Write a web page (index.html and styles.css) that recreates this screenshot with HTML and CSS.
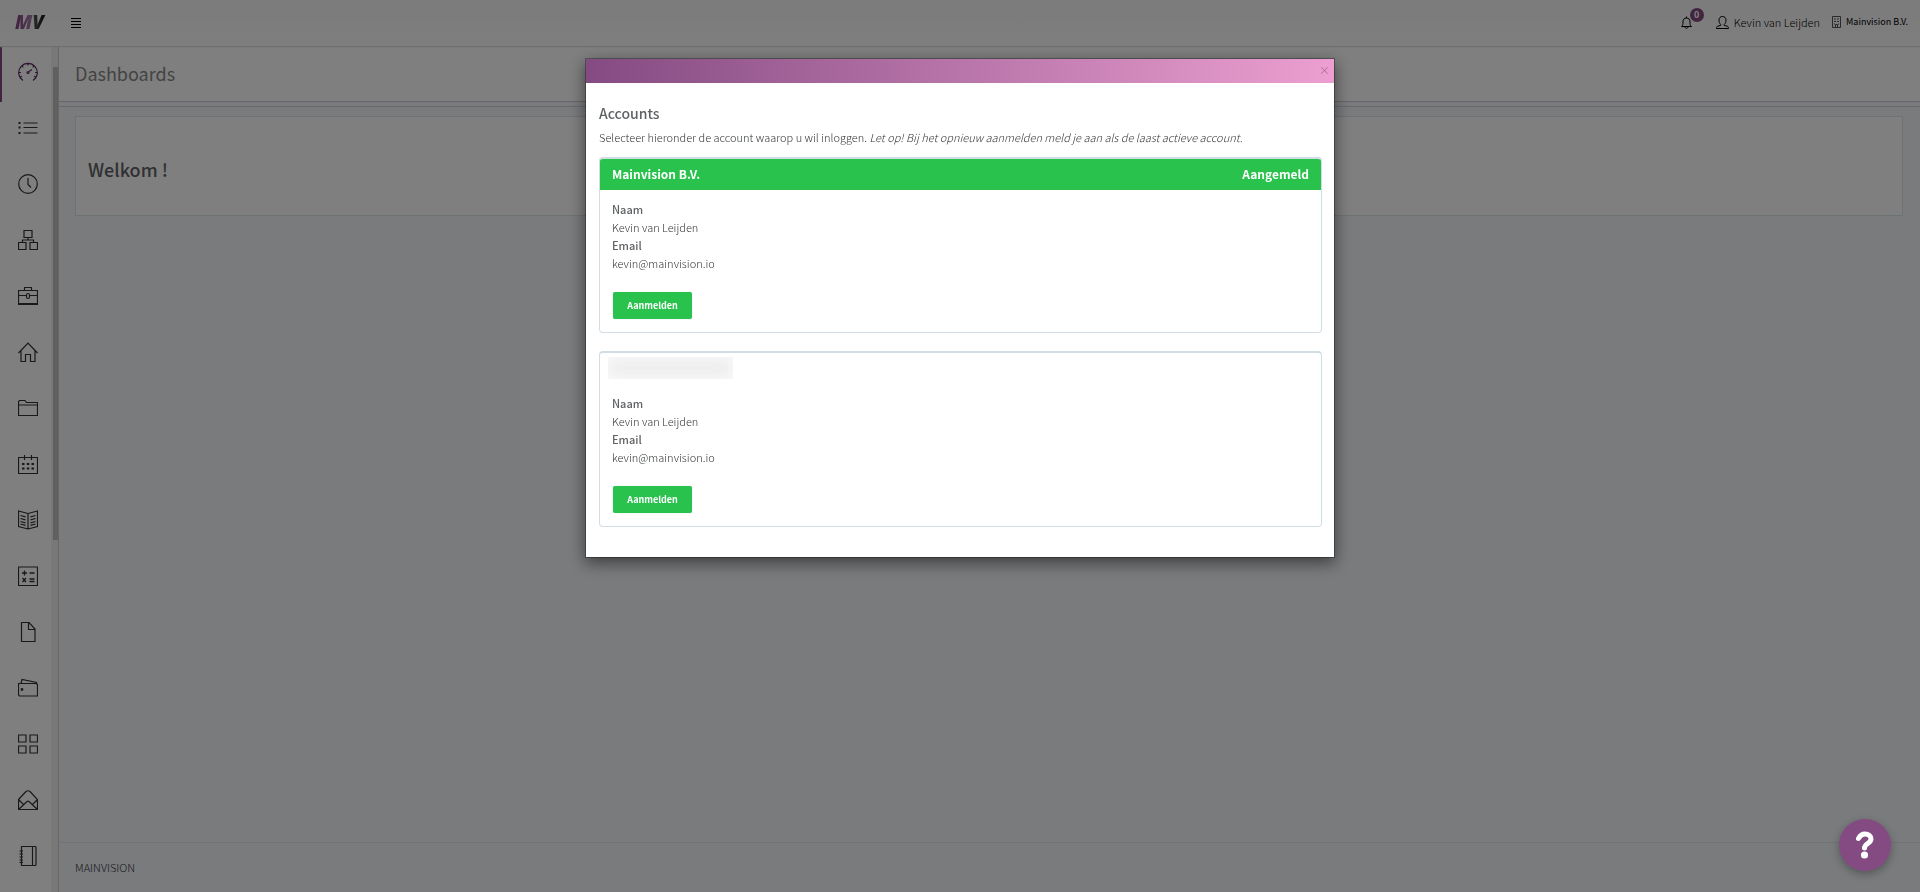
FILE: index.html
```html
<!DOCTYPE html>
<html lang="nl">
<head>
    <meta charset="UTF-8">
    <meta name="viewport" content="width=device-width, initial-scale=1.0">
    <title>Mainvision - Dashboards</title>
    <link rel="stylesheet" href="styles.css">
</head>
<body>
    <header class="header">
        <a href="#" class="logo">MV</a>
        <button class="menu-toggle" aria-label="Menu">
            <svg width="10" height="11" viewBox="0 0 10 11"><path d="M0 1.500h10M0 4.500h10M0 7.500h10M0 10.500h10" stroke="#000" stroke-width="1"/></svg>
        </button>
        <nav class="user-nav">
            <a href="#" class="notifications" aria-label="Meldingen">
                <svg width="11" height="13" viewBox="0 0 11 13"><path d="M.5 10.500c1.500-1 1.500-2.500 1.500-4.500C2 3.500 3.200 2 5.500 2S9 3.500 9 6c0 2 0 3.500 1.500 4.500zM5.500 2V.5M4 10.800c0 2 3 2 3 0"/></svg>
                <span class="badge">0</span>
            </a>
            <a href="#" class="user">
                <svg width="13" height="13" viewBox="0 0 13 13"><path d="M4.800 8.500C3.500 7.500 3 6 3 4c0-2 1.300-3.500 3.500-3.500S10 2 10 4c0 2-.5 3.500-1.800 4.500v.8l3.300 1c.7.3 1 .8 1 2.200H.5c0-1.400.3-1.900 1-2.200l3.300-1z"/></svg>
                Kevin van Leijden
            </a>
            <a href="#" class="company">
                <svg width="9" height="12" viewBox="0 0 9 12"><path d="M.5.5h8v11h-8zM2 3h2M5 3h2M2 5.500h2M5 5.500h2M2 8h1M6 8h1M3.500 11V8.500h2V11"/></svg>
                Mainvision B.V.
            </a>
        </nav>
    </header>

    <div class="layout">
        <aside class="sidebar">
            <nav class="side-nav">
                <a href="#" class="active" aria-label="Dashboards"><svg viewBox="0 0 20 20"><path d="M5 18.500A9.300 9.300 0 1 1 15 18.500M10 1.500v2M4 4l1.300 1.300M16 4l-1.300 1.300M1 10.500h2M17 10.500h2M2.500 15l1.500-.8M17.500 15l-1.500-.8M14 7.500l-3 2"/><circle cx="10" cy="10.500" r="1"/></svg></a>
                <a href="#" aria-label="Lijsten"><svg viewBox="0 0 20 20"><path d="M5.500 5h14M5.500 9.500h14M5.500 15h14"/><path d="M.5 5h2M.5 9.500h2M.5 15h2" stroke-width="2"/></svg></a>
                <a href="#" aria-label="Uren"><svg viewBox="0 0 20 20"><circle cx="10" cy="10" r="9.300"/><path d="M10 4v6.500l3 3"/></svg></a>
                <a href="#" aria-label="Structuur"><svg viewBox="0 0 20 20"><path d="M6 .5h8v7H6zM.5 12.500h7.500v7H.5zM12 12.500h7.500v7H12zM10 7.500V10M4.500 12.500V10h11v2.500"/></svg></a>
                <a href="#" aria-label="Projecten"><svg viewBox="0 0 20 20"><path d="M.5 4.500h19v14H.5zM6.500 4.500v-3h7v3M.5 9.500H8M12 9.500h7.500M.5 17.500h19"/><rect x="8.500" y="7.500" width="3" height="5" rx="1.500"/></svg></a>
                <a href="#" aria-label="Home"><svg viewBox="0 0 20 20"><path d="M.5 11L10 1l9.500 10M3 8.500v11h4.500v-7h5v7H17v-11"/></svg></a>
                <a href="#" aria-label="Mappen"><svg viewBox="0 0 20 20"><path d="M.5 17.500v-14L1.500 2.500H7l1.500 2h11v13zM.5 7h19"/></svg></a>
                <a href="#" aria-label="Agenda"><svg viewBox="0 0 20 20"><path d="M.5 3.500h19v16H.5zM6.500 1v5M13.500 1v5"/><path d="M4 10h2.500M8.800 10h2.500M13.500 10h2.500M4 14.500h2.500M8.800 14.500h2.500M13.500 14.500h2.500" stroke-width="2"/></svg></a>
                <a href="#" aria-label="Handleiding"><svg viewBox="0 0 20 20"><path d="M10 3.500L.5 1v15.500l9.500 2.500 9.500-2.500V1zM10 3.500V19M2.500 5.500l5 1.300M2.500 8.500l5 1.300M2.500 11.500l5 1.300M2.500 14l5 1.300M17.500 5.500l-5 1.300M17.500 8.500l-5 1.300M17.500 11.500l-5 1.300M17.500 14l-5 1.300"/></svg></a>
                <a href="#" aria-label="Calculatie"><svg viewBox="0 0 20 20"><path d="M.5 1h19v18.500H.5z"/><path d="M4 7h5M6.500 4.500v5M11.500 7h5M4.500 12l3.500 4M8 12l-3.500 4M11.500 13h5M11.500 15.500h5" stroke-width="1.300"/></svg></a>
                <a href="#" aria-label="Documenten"><svg viewBox="0 0 20 20"><path d="M3.500.5h7.500l6 6.500v12.500H3.500zM10.500.5V7.500H17"/></svg></a>
                <a href="#" aria-label="Financieel"><svg viewBox="0 0 20 20"><path d="M.5 5.500h17.500l1.500 1V18H1.500l-1-1zM3 5.500L4 1.500l14.500 3v1"/><circle cx="4" cy="11.500" r=".8"/></svg></a>
                <a href="#" aria-label="Modules"><svg viewBox="0 0 20 20"><path d="M.5 1H8v7H.5zM12 1h7.500v7H12zM.5 12H8v7H.5zM12 12h7.500v7H12z"/></svg></a>
                <a href="#" aria-label="Mail"><svg viewBox="0 0 20 20"><path d="M.5 9.500L8 1.500q2-1.500 4 0l7.500 8v10H.5zM.5 9.500L6 15M19.500 9.500L14 15M.5 19.500l8.500-8q1-.8 2 0l8.500 8"/></svg></a>
                <a href="#" aria-label="Logboek"><svg viewBox="0 0 20 20"><path d="M3.500.5H17q1 0 1 1v17q0 1-1 1H3.500zM14.500.5v19M1.500 5H5M1.500 8H5M1.500 11H5M1.500 14H5M1.500 16.500H5"/></svg></a>
            </nav>
            <div class="scroll-track"><div class="scroll-thumb"></div></div>
        </aside>

        <main class="content">
            <div class="page-title">
                <h1>Dashboards</h1>
            </div>
            <section class="page-body">
                <div class="welcome">
                    <h2>Welkom !</h2>
                </div>
            </section>
            <footer class="footer">MAINVISION</footer>
        </main>
    </div>

    <div class="backdrop">
        <div class="modal" role="dialog" aria-labelledby="accounts-title">
            <div class="modal-header">
                <button class="close" aria-label="Sluiten">×</button>
            </div>
            <div class="modal-body">
                <h4 id="accounts-title">Accounts</h4>
                <p>Selecteer hieronder de account waarop u wil inloggen. <i>Let op! Bij het opnieuw aanmelden meld je aan als de laast actieve account.</i></p>

                <div class="panel">
                    <div class="panel-heading current">
                        <span>Mainvision B.V.</span>
                        <span>Aangemeld</span>
                    </div>
                    <dl>
                        <dt>Naam</dt>
                        <dd>Kevin van Leijden</dd>
                        <dt>Email</dt>
                        <dd>kevin@mainvision.io</dd>
                    </dl>
                    <button class="btn">Aanmelden</button>
                </div>

                <div class="panel">
                    <div class="panel-heading">
                        <span class="hidden-name"></span>
                    </div>
                    <dl>
                        <dt>Naam</dt>
                        <dd>Kevin van Leijden</dd>
                        <dt>Email</dt>
                        <dd>kevin@mainvision.io</dd>
                    </dl>
                    <button class="btn">Aanmelden</button>
                </div>
            </div>
        </div>
    </div>

    <button class="help" aria-label="Help">
        <svg width="20" height="28" viewBox="0 0 20 28" fill="none">
            <path d="M3.500 7.500C5 4.500 7 3 10 3c3.500 0 6 2 6 5 0 4.500-6.500 4.500-6.500 9" stroke="#fff" stroke-width="5" stroke-linecap="round"/>
            <circle cx="9.500" cy="24" r="3.600" fill="#fff"/>
        </svg>
    </button>
</body>
</html>
```
FILE: styles.css
```css
:root {
    --purple: #844b82;
    --green: #29c24d;
    --text: #333537;
    --heading: #5f6264;
    --line: #d1dde5;
}

* {
    box-sizing: border-box;
}

body {
    font-family: "Noto Sans CJK SC", "Open Sans", sans-serif;
    font-size: 11px;
    font-weight: 300;
    line-height: 18px;
    color: var(--text);
    margin: 0;
    height: 100vh;
    display: flex;
    flex-direction: column;
    overflow: hidden;
}

a {
    color: inherit;
    text-decoration: none;
}

button {
    font-family: inherit;
    border: none;
    padding: 0;
    background: none;
    cursor: pointer;
}

h1, h2, h4, p, dl, dd {
    margin: 0;
}

h2, h4, dt {
    color: var(--heading);
}

svg {
    fill: none;
    stroke: currentColor;
}

/* Header */
.header {
    height: 46px;
    flex: none;
    display: flex;
    align-items: center;
    padding: 0 12px 2px 15px;
    background: linear-gradient(#f7f7f7, #fdfdfd);
    box-shadow: 0 1px 1px #dcdcdc;
    color: #000;
    z-index: 1;
}

.logo {
    width: 56px;
    font-family: "Open Sans", sans-serif;
    font-size: 19px;
    font-weight: 800;
    font-style: italic;
    background: linear-gradient(90deg, #7f3f7f 0, #a77ba8 16px, #555 19px, #111 30px);
    -webkit-background-clip: text;
    background-clip: text;
    color: transparent;
}

.menu-toggle {
    display: flex;
}

.user-nav {
    margin-left: auto;
    display: flex;
    align-items: center;
    gap: 12px;
}

.user-nav a {
    display: flex;
    align-items: center;
    gap: 5px;
}

.user-nav svg {
    flex: none;
}

.notifications {
    position: relative;
    width: 23px;
}

.badge {
    position: absolute;
    top: -8px;
    right: 0;
    width: 14px;
    height: 14px;
    border-radius: 50%;
    background: var(--purple);
    color: #fff;
    font-size: 9px;
    line-height: 13px;
    font-weight: 700;
    text-align: center;
}

.user-nav .company {
    font-size: 9px;
    font-weight: 400;
}

.company svg {
    color: #555;
}

/* Layout */
.layout {
    flex: 1;
    display: flex;
    min-height: 0;
}

.sidebar {
    width: 59px;
    flex: none;
    display: flex;
    background: #fff;
    border-right: 1px solid #cdcdcf;
    overflow: hidden;
}

.side-nav {
    flex: 1;
}

.side-nav a {
    display: flex;
    align-items: center;
    height: 56px;
    padding: 0 0 4px 18px;
    color: #333;
}

.side-nav .active {
    border-left: 2px solid var(--purple);
    padding-left: 16px;
    color: #5e2c60;
}

.side-nav svg {
    width: 20px;
    height: 20px;
    stroke-width: 1.2;
}

.scroll-track {
    width: 7px;
    padding: 21px 0 0 2px;
    background: #f1f1f1;
}

.scroll-thumb {
    height: 473px;
    background: #c1c1c1;
}

.content {
    flex: 1;
    display: flex;
    flex-direction: column;
    background: #f4f6fa;
}

.page-title {
    height: 56px;
    padding: 13px 16px;
    background: #fff;
    border-bottom: 1px solid #c8ccd2;
}

.page-title h1 {
    font-size: 18px;
    line-height: 28px;
    font-weight: 400;
    color: #888;
}

.page-body {
    flex: 1;
    margin-top: 4px;
    padding: 9px 17px 0 16px;
    border-top: 1px solid #cfd4da;
}

.welcome {
    height: 100px;
    display: flex;
    align-items: center;
    padding: 6px 12px 0;
    background: #fff;
    border: 1px solid #dbe5e9;
}

.welcome h2 {
    font-size: 18px;
    line-height: 28px;
    font-weight: 500;
}

.footer {
    height: 50px;
    padding: 15px 16px;
    border-top: 1px solid #e2e6ec;
}

/* Modal */
.backdrop {
    position: fixed;
    inset: 0;
    padding-top: 58px;
    background: rgba(0, 0, 0, 0.5);
    z-index: 10;
}

.modal {
    max-width: 750px;
    margin: 0 auto;
    background: #fff;
    background-clip: padding-box;
    border: 1px solid rgba(0, 0, 0, 0.3);
    box-shadow: 0 5px 15px rgba(0, 0, 0, 0.5);
}

.modal-header {
    height: 24px;
    display: flex;
    align-items: center;
    justify-content: flex-end;
    padding: 0 4px 2px 0;
    background: linear-gradient(90deg, #844b82, #ec9fd0);
}

.close {
    font-size: 11px;
    line-height: 18px;
    color: #b06f9d;
}

.modal-body {
    padding: 20px 12px 30px 13px;
}

.modal-body h4 {
    font-size: 14px;
    line-height: 20px;
    font-weight: 500;
    margin-bottom: 5px;
}

.modal-body p {
    margin-bottom: 11px;
}

.panel {
    border: 1px solid var(--line);
    border-top-width: 2px;
    border-radius: 4px;
    margin-bottom: 18px;
    padding-bottom: 13px;
    overflow: hidden;
}

.panel:last-child {
    margin-bottom: 0;
}

.panel-heading {
    height: 31px;
    display: flex;
    justify-content: space-between;
    padding: 4px 12px;
    font-size: 12px;
    line-height: 22px;
    font-weight: 700;
}

.panel-heading.current {
    background: var(--green);
    color: #fff;
}

.hidden-name {
    width: 125px;
    height: 22px;
    margin-left: -4px;
    background: #eee;
    box-shadow: inset 0 0 12px 2px #f9f9f9;
}

.panel dl {
    padding: 10px 12px 20px;
}

.panel dt {
    font-weight: 500;
}

.btn {
    display: block;
    width: 79px;
    height: 27px;
    margin-left: 13px;
    border-radius: 2px;
    background: var(--green);
    box-shadow: 0 0 1px #9cc;
    color: #fff;
    font-size: 9px;
    font-weight: 700;
}

/* Help */
.help {
    position: fixed;
    right: 29px;
    bottom: 21px;
    width: 52px;
    height: 52px;
    display: flex;
    align-items: center;
    justify-content: center;
    border-radius: 50%;
    background: var(--purple);
    box-shadow: 0 3px 8px rgba(0, 0, 0, 0.3);
    z-index: 20;
}

.help svg {
    stroke: none;
}

.help path {
    stroke: #fff;
}
```
